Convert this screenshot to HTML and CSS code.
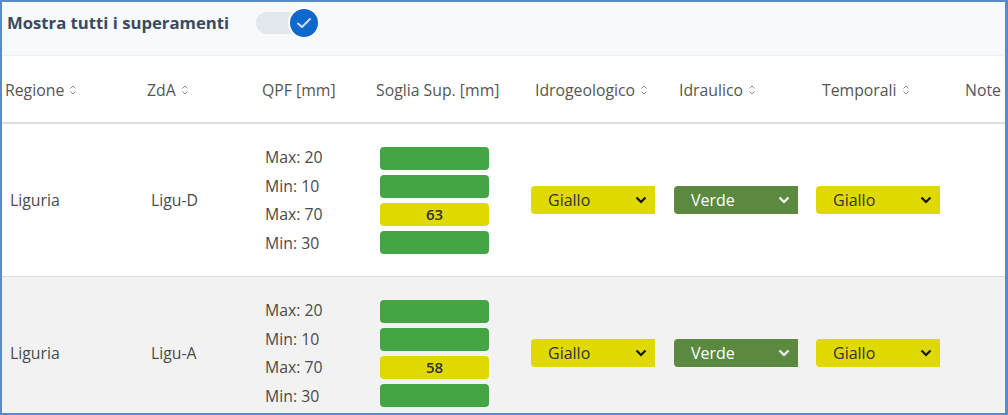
FILE: index.html
```html
<!DOCTYPE html>
<html lang="it">
<head>
<meta charset="utf-8">
<link rel="stylesheet" href="styles.css">
<title>Superamenti</title>
</head>
<body>
<div class="frame">
  <div class="topbar">
    <span class="title">Mostra tutti i superamenti</span>
    <span class="toggle">
      <span class="track"></span>
      <span class="knob">
        <svg width="16" height="12" viewBox="0 0 16 12"><path d="M2 6.5 L6 10 L14 2" fill="none" stroke="#cfe0f5" stroke-width="2" stroke-linecap="round" stroke-linejoin="round"/></svg>
      </span>
    </span>
  </div>
  <div class="table">
    <div class="row head">
      <div class="th c1">Regione <svg class="sort" width="8" height="12" viewBox="0 0 8 12"><path d="M1.5 4.5 L4 2 L6.5 4.5 M1.5 7.5 L4 10 L6.5 7.5" fill="none" stroke="#888" stroke-width="1"/></svg></div>
      <div class="th c2">ZdA <svg class="sort" width="8" height="12" viewBox="0 0 8 12"><path d="M1.5 4.5 L4 2 L6.5 4.5 M1.5 7.5 L4 10 L6.5 7.5" fill="none" stroke="#888" stroke-width="1"/></svg></div>
      <div class="th c3">QPF [mm]</div>
      <div class="th c4">Soglia Sup. [mm]</div>
      <div class="th c5">Idrogeologico <svg class="sort" width="8" height="12" viewBox="0 0 8 12"><path d="M1.5 4.5 L4 2 L6.5 4.5 M1.5 7.5 L4 10 L6.5 7.5" fill="none" stroke="#888" stroke-width="1"/></svg></div>
      <div class="th c6">Idraulico <svg class="sort" width="8" height="12" viewBox="0 0 8 12"><path d="M1.5 4.5 L4 2 L6.5 4.5 M1.5 7.5 L4 10 L6.5 7.5" fill="none" stroke="#888" stroke-width="1"/></svg></div>
      <div class="th c7">Temporali <svg class="sort" width="8" height="12" viewBox="0 0 8 12"><path d="M1.5 4.5 L4 2 L6.5 4.5 M1.5 7.5 L4 10 L6.5 7.5" fill="none" stroke="#888" stroke-width="1"/></svg></div>
      <div class="th c8">Note</div>
    </div>

    <div class="row body">
      <div class="td c1">Liguria</div>
      <div class="td c2">Ligu-D</div>
      <div class="td c3"><div class="qpf"><span>Max: 20</span><span>Min: 10</span><span>Max: 70</span><span>Min: 30</span></div></div>
      <div class="td c4"><div class="bars"><span class="bar green"></span><span class="bar green"></span><span class="bar yellow">63</span><span class="bar green"></span></div></div>
      <div class="td c5"><div class="sel giallo">Giallo<svg class="chev" width="12" height="8" viewBox="0 0 12 8"><path d="M1.5 1.5 L6 6 L10.5 1.5" fill="none" stroke="#111" stroke-width="2.2"/></svg></div></div>
      <div class="td c6"><div class="sel verde">Verde<svg class="chev" width="12" height="8" viewBox="0 0 12 8"><path d="M1.5 1.5 L6 6 L10.5 1.5" fill="none" stroke="#fff" stroke-width="2.2"/></svg></div></div>
      <div class="td c7"><div class="sel giallo">Giallo<svg class="chev" width="12" height="8" viewBox="0 0 12 8"><path d="M1.5 1.5 L6 6 L10.5 1.5" fill="none" stroke="#111" stroke-width="2.2"/></svg></div></div>
      <div class="td c8"></div>
    </div>

    <div class="row body alt">
      <div class="td c1">Liguria</div>
      <div class="td c2">Ligu-A</div>
      <div class="td c3"><div class="qpf"><span>Max: 20</span><span>Min: 10</span><span>Max: 70</span><span>Min: 30</span></div></div>
      <div class="td c4"><div class="bars"><span class="bar green"></span><span class="bar green"></span><span class="bar yellow">58</span><span class="bar green"></span></div></div>
      <div class="td c5"><div class="sel giallo">Giallo<svg class="chev" width="12" height="8" viewBox="0 0 12 8"><path d="M1.5 1.5 L6 6 L10.5 1.5" fill="none" stroke="#111" stroke-width="2.2"/></svg></div></div>
      <div class="td c6"><div class="sel verde">Verde<svg class="chev" width="12" height="8" viewBox="0 0 12 8"><path d="M1.5 1.5 L6 6 L10.5 1.5" fill="none" stroke="#fff" stroke-width="2.2"/></svg></div></div>
      <div class="td c7"><div class="sel giallo">Giallo<svg class="chev" width="12" height="8" viewBox="0 0 12 8"><path d="M1.5 1.5 L6 6 L10.5 1.5" fill="none" stroke="#111" stroke-width="2.2"/></svg></div></div>
      <div class="td c8"></div>
    </div>
  </div>
</div>
</body>
</html>
```

FILE: styles.css
```css
* { box-sizing: border-box; }
html, body { margin: 0; padding: 0; }
body {
  width: 1008px;
  height: 415px;
  overflow: hidden;
  font-family: "Open Sans", "Noto Sans", sans-serif;
  color: #444;
}
.frame {
  width: 1008px;
  height: 415px;
  border: 2px solid #5b8ac6;
  border-right-width: 3px;
  overflow: hidden;
  background: #fff;
}
.topbar {
  height: 54px;
  background: #f7f9fb;
  border-bottom: 1px solid #eef0f3;
  display: flex;
  align-items: center;
  padding-left: 5px;
}
.title {
  font-weight: 700;
  font-size: 16.7px;
  color: #3b4a5c;
  margin-top: -12px;
}
.toggle {
  display: flex;
  align-items: center;
  margin-left: 27px;
  margin-top: -12px;
}
.track {
  width: 46px;
  height: 22px;
  border-radius: 11px;
  background: #e3e7ee;
}
.knob {
  width: 32px;
  height: 32px;
  border-radius: 50%;
  background: #0f68cc;
  border: 2px solid #fff;
  margin-left: -14px;
  display: flex;
  align-items: center;
  justify-content: center;
}
.row {
  display: grid;
  grid-template-columns: 143px 113px 114px 148px 144px 142px 144px 1fr;
}
.head {
  height: 68px;
  border-bottom: 2px solid #dedede;
  align-items: center;
  font-size: 15.8px;
  color: #555;
}
.th { display: flex; align-items: center; white-space: nowrap; padding-top: 2px; }
.sort { margin-left: 5px; }
.head .c1 { padding-left: 3px; }
.head .c2 { padding-left: 2px; }
.head .c3 { padding-left: 4px; }
.head .c4 { padding-left: 4px; }
.head .c5 { padding-left: 15px; }
.head .c6 { padding-left: 15px; }
.head .c7 { padding-left: 16px; }
.head .c8 { padding-left: 15px; }

.body {
  height: 153px;
  border-bottom: 1px solid #dcdcdc;
  align-items: center;
  font-size: 15.8px;
  color: #4a4a4a;
}
.alt { background: #f2f2f2; }
.body .c1 { padding-left: 8px; }
.body .c2 { padding-left: 6px; }
.body .c3 { padding-left: 7px; }
.body .c4 { padding-left: 8px; }
.body .c5 { padding-left: 11px; }
.body .c6 { padding-left: 10px; }
.body .c7 { padding-left: 10px; }

.qpf { display: flex; flex-direction: column; }
.qpf span { line-height: 28.5px; }
.bars { display: flex; flex-direction: column; gap: 5px; width: 109px; }
.bar {
  height: 23px;
  border-radius: 4px;
  display: flex;
  align-items: center;
  justify-content: center;
  font-size: 15px;
  font-weight: 600;
  color: #333;
}
.green { background: #43a543; }
.yellow { background: #dfd900; }

.sel {
  width: 124px;
  height: 28px;
  border-radius: 4px 0 0 4px;
  display: flex;
  align-items: center;
  justify-content: space-between;
  padding: 0 8px 0 17px;
  font-size: 16px;
}
.giallo { background: #dfd900; color: #333; }
.verde { background: #5b893f; color: #fff; }
```
